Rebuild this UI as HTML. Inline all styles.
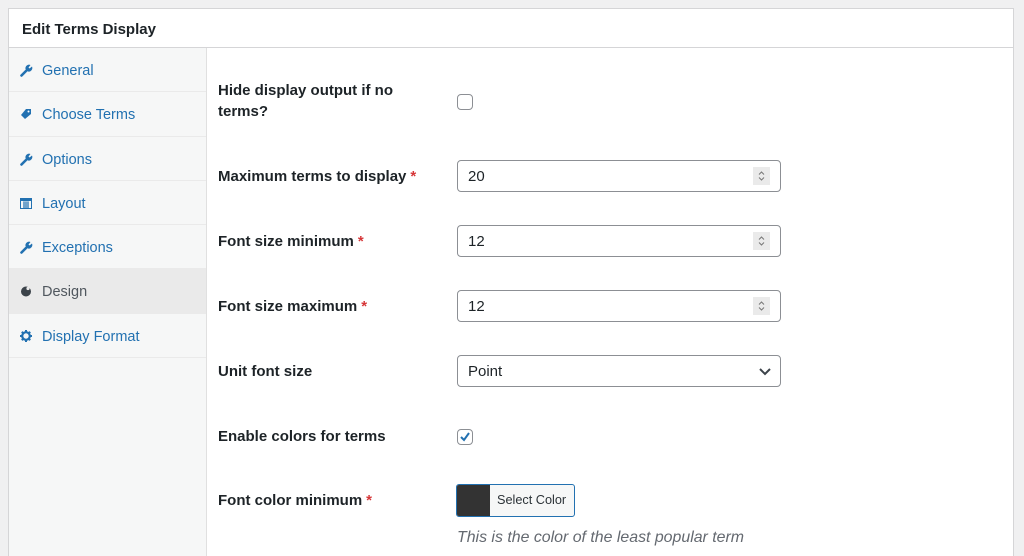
<!DOCTYPE html>
<html style="overflow:hidden;height:556px"><head><meta charset="utf-8"><style>
*{box-sizing:border-box;margin:0;padding:0}
html,body{overflow:hidden}
body{width:1024px;height:556px;overflow:hidden;background:#f0f0f1;font-family:"Liberation Sans",Arial,sans-serif;font-size:15px;color:#1d2327;position:relative}
.panel{position:absolute;left:8px;top:8px;width:1006px;height:560px;background:#fff;border:1px solid #d5d5d7}
.hdr{position:absolute;left:0;top:0;right:0;height:39px;border-bottom:1px solid #d5d5d7;font-weight:bold;font-size:15px;padding:12px 0 0 13px}
.side{position:absolute;left:0;top:39px;width:198px;bottom:0;background:#f6f7f7;border-right:1px solid #e0e0e0}
.item{height:44.3px;border-bottom:1px solid #eaeaea;color:#2271b1;padding:15px 0 0 33px;position:relative;font-size:14.5px}
.item svg{position:absolute;left:11px;top:16px}
.item.act{background:#eaeaea;color:#50575e}
.lbl{position:absolute;left:209px;font-weight:bold;line-height:21px}
.req{color:#d63638;margin-left:4px}
.inp{position:absolute;left:448px;width:324px;height:32px;border:1px solid #8c8f94;border-radius:4px;padding:7px 10px;font-size:15px;background:#fff}
.spin{position:absolute;right:10px;top:6px;width:17px;height:18px;background:#eaeaea}
.cb{position:absolute;left:448px;width:16px;height:16px;border:1px solid #8c8f94;border-radius:4px;background:#fff}
</style></head><body>
<div class="panel">
<div class="hdr">Edit Terms Display</div>
<div class="side">
<div class="item"><svg width="13" height="13" viewBox="0 0 13 13"><path d="M1.5 11.5 L6.5 6.5" stroke="#2271b1" stroke-width="2.6" stroke-linecap="round"/><path d="M5.5 5 A3.6 3.6 0 0 1 10.5 1 L8.5 3.5 L9.5 4.5 L12 2.5 A3.6 3.6 0 0 1 8 7.5 Z" fill="#2271b1"/></svg>General</div>
<div class="item"><svg width="12" height="12" viewBox="0 0 12 12"><path d="M6 1 H11 V6 L5 11 L1 7 Z" fill="#2271b1"/><circle cx="8.5" cy="3.5" r="1" fill="#fff"/></svg>Choose Terms</div>
<div class="item"><svg width="13" height="13" viewBox="0 0 13 13"><path d="M1.5 11.5 L6.5 6.5" stroke="#2271b1" stroke-width="2.6" stroke-linecap="round"/><path d="M5.5 5 A3.6 3.6 0 0 1 10.5 1 L8.5 3.5 L9.5 4.5 L12 2.5 A3.6 3.6 0 0 1 8 7.5 Z" fill="#2271b1"/></svg>Options</div>
<div class="item"><svg width="12" height="12" viewBox="0 0 12 12"><rect x="0.5" y="1.5" width="11" height="10" fill="none" stroke="#2271b1"/><rect x="0.5" y="1.5" width="11" height="2.5" fill="#2271b1"/><path d="M3 6h6M3 8h6M3 10h6M4 4v7M6 4v7M8 4v7" stroke="#2271b1" stroke-width=".8"/></svg>Layout</div>
<div class="item"><svg width="13" height="13" viewBox="0 0 13 13"><path d="M1.5 11.5 L6.5 6.5" stroke="#2271b1" stroke-width="2.6" stroke-linecap="round"/><path d="M5.5 5 A3.6 3.6 0 0 1 10.5 1 L8.5 3.5 L9.5 4.5 L12 2.5 A3.6 3.6 0 0 1 8 7.5 Z" fill="#2271b1"/></svg>Exceptions</div>
<div class="item act"><svg width="12" height="12" viewBox="0 0 12 12"><circle cx="6" cy="6.5" r="5" fill="#3c434a"/><circle cx="8" cy="3.5" r="1.6" fill="#eaeaea"/></svg>Design</div>
<div class="item"><svg width="12" height="12" viewBox="0 0 12 12"><circle cx="6" cy="6" r="3.8" fill="none" stroke="#2271b1" stroke-width="2.2"/><path d="M6 0v12M0 6h12M1.8 1.8l8.4 8.4M10.2 1.8l-8.4 8.4" stroke="#2271b1" stroke-width="2" stroke-dasharray="2 8"/></svg>Display Format</div>
</div>
<div class="lbl" style="top:71px">Hide display output if no<br>terms?</div>
<div class="cb" style="top:85px"></div>
<div class="lbl" style="top:157px">Maximum terms to display<span class="req">*</span></div>
<div class="inp" style="top:151px">20<div class="spin"><svg width="17" height="18" viewBox="0 0 17 18"><path d="M6 7.5l2.5-2.5L11 7.5M6 10.5l2.5 2.5L11 10.5" stroke="#777" fill="none"/></svg></div></div>
<div class="lbl" style="top:222px">Font size minimum<span class="req">*</span></div>
<div class="inp" style="top:216px">12<div class="spin"><svg width="17" height="18" viewBox="0 0 17 18"><path d="M6 7.5l2.5-2.5L11 7.5M6 10.5l2.5 2.5L11 10.5" stroke="#777" fill="none"/></svg></div></div>
<div class="lbl" style="top:287px">Font size maximum<span class="req">*</span></div>
<div class="inp" style="top:281px">12<div class="spin"><svg width="17" height="18" viewBox="0 0 17 18"><path d="M6 7.5l2.5-2.5L11 7.5M6 10.5l2.5 2.5L11 10.5" stroke="#777" fill="none"/></svg></div></div>
<div class="lbl" style="top:352px">Unit font size</div>
<div class="inp" style="top:346px">Point<svg style="position:absolute;right:8px;top:10px" width="14" height="10" viewBox="0 0 14 10"><path d="M2 3l5 5 5-5" stroke="#3c434a" stroke-width="2" fill="none"/></svg></div>
<div class="lbl" style="top:417px">Enable colors for terms</div>
<div class="cb" style="top:420px"><svg width="14" height="14" viewBox="0 0 14 14"><path d="M3 7l3 3 5-7" stroke="#2271b1" stroke-width="2" fill="none"/></svg></div>
<div class="lbl" style="top:481px">Font color minimum<span class="req">*</span></div>
<div style="position:absolute;left:447px;top:475px;width:119px;height:33px;border:1px solid #2271b1;border-radius:3px;background:#f6f7f7;overflow:hidden;font-size:12.7px;color:#2c3338"><div style="position:absolute;left:0;top:0;width:33px;height:33px;background:#333"></div><span style="position:absolute;left:40px;top:8px">Select Color</span></div>
<div style="position:absolute;left:448px;top:520px;font-style:italic;color:#646970;font-size:15.9px">This is the color of the least popular term</div>
</div>
</body></html>
